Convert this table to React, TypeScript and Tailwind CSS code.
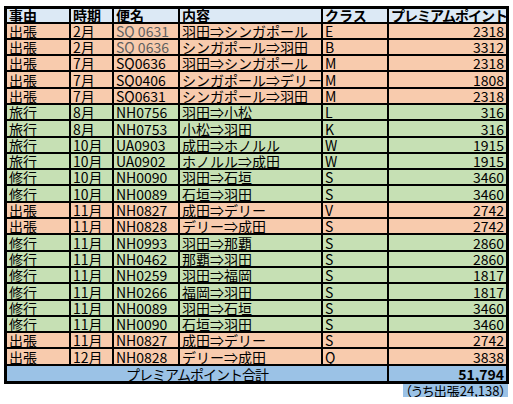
import type { ReactNode } from "react";

type Row = {
  reason: string;
  month: string;
  flight: string;
  route: string;
  cls: string;
  points: number;
  muted?: boolean;
};

const ROWS: Row[] = [
  { reason: "出張", month: "2月", flight: "SQ 0631", route: "羽田⇒シンガポール", cls: "E", points: 2318, muted: true },
  { reason: "出張", month: "2月", flight: "SQ 0636", route: "シンガポール⇒羽田", cls: "B", points: 3312, muted: true },
  { reason: "出張", month: "7月", flight: "SQ0636", route: "羽田⇒シンガポール", cls: "M", points: 2318 },
  { reason: "出張", month: "7月", flight: "SQ0406", route: "シンガポール⇒デリー", cls: "M", points: 1808 },
  { reason: "出張", month: "7月", flight: "SQ0631", route: "シンガポール⇒羽田", cls: "M", points: 2318 },
  { reason: "旅行", month: "8月", flight: "NH0756", route: "羽田⇒小松", cls: "L", points: 316 },
  { reason: "旅行", month: "8月", flight: "NH0753", route: "小松⇒羽田", cls: "K", points: 316 },
  { reason: "旅行", month: "10月", flight: "UA0903", route: "成田⇒ホノルル", cls: "W", points: 1915 },
  { reason: "旅行", month: "10月", flight: "UA0902", route: "ホノルル⇒成田", cls: "W", points: 1915 },
  { reason: "修行", month: "10月", flight: "NH0090", route: "羽田⇒石垣", cls: "S", points: 3460 },
  { reason: "修行", month: "10月", flight: "NH0089", route: "石垣⇒羽田", cls: "S", points: 3460 },
  { reason: "出張", month: "11月", flight: "NH0827", route: "成田⇒デリー", cls: "V", points: 2742 },
  { reason: "出張", month: "11月", flight: "NH0828", route: "デリー⇒成田", cls: "S", points: 2742 },
  { reason: "修行", month: "11月", flight: "NH0993", route: "羽田⇒那覇", cls: "S", points: 2860 },
  { reason: "修行", month: "11月", flight: "NH0462", route: "那覇⇒羽田", cls: "S", points: 2860 },
  { reason: "修行", month: "11月", flight: "NH0259", route: "羽田⇒福岡", cls: "S", points: 1817 },
  { reason: "修行", month: "11月", flight: "NH0266", route: "福岡⇒羽田", cls: "S", points: 1817 },
  { reason: "修行", month: "11月", flight: "NH0089", route: "羽田⇒石垣", cls: "S", points: 3460 },
  { reason: "修行", month: "11月", flight: "NH0090", route: "石垣⇒羽田", cls: "S", points: 3460 },
  { reason: "出張", month: "11月", flight: "NH0827", route: "成田⇒デリー", cls: "S", points: 2742 },
  { reason: "出張", month: "12月", flight: "NH0828", route: "デリー⇒成田", cls: "Q", points: 3838 },
];

const COLS = "grid grid-cols-[64px_43px_66px_143px_66px_117px]";

function Cell({ children, right, last }: { children: ReactNode; right?: boolean; last?: boolean }) {
  return (
    <div
      className={`flex items-end overflow-hidden whitespace-nowrap px-[2px] leading-[14px] ${
        last ? "" : "border-r-2 border-black"
      } ${right ? "justify-end" : ""}`}
    >
      {children}
    </div>
  );
}

export default function App() {
  const total = ROWS.reduce((sum, r) => sum + r.points, 0);

  return (
    <div
      className="h-[404px] w-[513px] bg-white pl-[4px] pt-[6px] text-[14px] text-black"
      style={{ fontFamily: '"Liberation Sans Narrow", "Noto Sans CJK JP", sans-serif' }}
    >
      <div className="w-[505px] border-[3px] border-black">
        <div className={`${COLS} h-[14.5px] border-b-2 border-black bg-[#dce9f5] font-bold`}>
          <Cell>事由</Cell>
          <Cell>時期</Cell>
          <Cell>便名</Cell>
          <Cell>内容</Cell>
          <Cell>クラス</Cell>
          <Cell last>
            <span className="tracking-[-1px]">プレミアムポイント</span>
          </Cell>
        </div>

        {ROWS.map((r, i) => (
          <div
            key={i}
            className={`${COLS} h-[16.3px] border-b-2 border-black ${
              r.reason === "出張" ? "bg-[#f8cbad]" : "bg-[#c6e0b4]"
            }`}
          >
            <Cell>{r.reason}</Cell>
            <Cell>{r.month}</Cell>
            <Cell>
              <span className={r.muted ? "text-[#5f5f5f]" : ""}>{r.flight}</span>
            </Cell>
            <Cell>{r.route}</Cell>
            <Cell>{r.cls}</Cell>
            <Cell right last>
              {r.points}
            </Cell>
          </div>
        ))}

        <div className="grid h-[15.5px] grid-cols-[382px_117px] bg-[#9bc2e6]">
          <div className="flex items-end justify-center border-r-2 border-black leading-[14px]">
            <span className="tracking-[-1px]">プレミアムポイント合計</span>
          </div>
          <div className="flex items-end justify-end px-[2px] font-bold leading-[14px]">
            {total.toLocaleString("en-US")}
          </div>
        </div>
      </div>

      <div className="ml-[399px] flex h-[13px] w-[105px] items-end justify-end overflow-hidden whitespace-nowrap bg-[#9bc2e6] pr-[2px] text-[13px] leading-[13px] [font-feature-settings:'palt']">
        （うち出張24,138）
      </div>
    </div>
  );
}
